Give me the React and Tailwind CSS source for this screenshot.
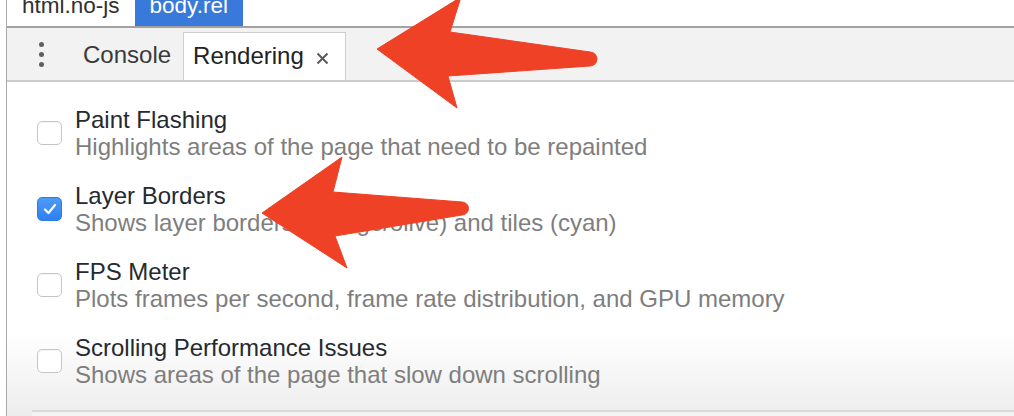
import { useState } from 'react';

const options = [
    {
        title: 'Paint Flashing',
        description: 'Highlights areas of the page that need to be repainted',
        checked: false
    },
    {
        title: 'Layer Borders',
        description: 'Shows layer borders (orange/olive) and tiles (cyan)',
        checked: true
    },
    {
        title: 'FPS Meter',
        description: 'Plots frames per second, frame rate distribution, and GPU memory',
        checked: false
    },
    {
        title: 'Scrolling Performance Issues',
        description: 'Shows areas of the page that slow down scrolling',
        checked: false
    }
];

function Checkbox({ checked, onChange }) {
    return (
        <button
            onClick={onChange}
            className={`shrink-0 w-[25px] h-[24px] rounded-[5px] border flex items-center justify-center ${
                checked
                    ? 'bg-linear-to-b from-[#4c9bf7] to-[#2f7ff0] border-[#2f7be6]'
                    : 'bg-white border-[#c6c6c6] shadow-[inset_0_1px_1px_rgba(0,0,0,0.04)]'
            }`}
        >
            {checked && (
                <svg width="14" height="12" viewBox="0 0 14 12" fill="none">
                    <path d="M2 6.5 L5.5 10 L12 2" stroke="white" strokeWidth="2.2" strokeLinecap="round" strokeLinejoin="round" />
                </svg>
            )}
        </button>
    );
}

export default function App() {
    const [state, setState] = useState(options.map((o) => o.checked));

    return (
        <div className="relative w-[1014px] h-[416px] overflow-hidden bg-white font-['Liberation_Sans',Arial,sans-serif] text-[24px]">
            <div className="ml-[6px] h-full border-l border-[#a9a9a9] flex flex-col">
                {/* breadcrumbs */}
                <div className="h-[26px] flex items-start text-[22.5px]">
                    <div className="h-[26px] px-[15px] text-[#303030]">
                        <span className="block leading-[22px] -mt-[5px]">html.no-js</span>
                    </div>
                    <div className="h-[26px] px-[15px] bg-[#3879d9] text-white">
                        <span className="block leading-[22px] -mt-[5px]">body.rel</span>
                    </div>
                </div>

                {/* drawer toolbar */}
                <div className="h-[56px] border-t-2 border-b-2 border-t-[#a2a2a2] border-b-[#cbcbcb] bg-[#f2f2f2] flex items-end">
                    <div className="w-[70px] h-full flex flex-col items-center justify-center gap-[5px] pl-[1px] -ml-[1px]">
                        <span className="w-[5px] h-[5px] rounded-full bg-[#5f5f5f]" />
                        <span className="w-[5px] h-[5px] rounded-full bg-[#5f5f5f]" />
                        <span className="w-[5px] h-[5px] rounded-full bg-[#5f5f5f]" />
                    </div>
                    <div className="h-full flex items-center pl-[7px] pr-[12px] pt-[1px] text-[#3a3a3a] leading-[27px]">Console</div>
                    <div className="h-[48px] bg-white border border-b-0 border-[#cdcdcd] flex items-center pl-[9px] pr-[16px] text-[#222] leading-[27px]">
                        <span className="pb-[2px]">Rendering</span>
                        <svg className="ml-[12px] mt-[4px]" width="13" height="13" viewBox="0 0 13 13">
                            <path d="M1.5 1.5 L11.5 11.5 M11.5 1.5 L1.5 11.5" stroke="#5a5a5a" strokeWidth="2" />
                        </svg>
                    </div>
                </div>

                {/* rendering options */}
                <div className="flex-1 flex flex-col bg-linear-to-b from-white from-[75%] to-[#ededed]">
                    <div className="flex-1 flex flex-col gap-[22px] pt-[24px] pl-[30px]">
                        {options.map((option, i) => (
                            <div key={option.title} className="flex items-center gap-[13px]">
                                <Checkbox
                                    checked={state[i]}
                                    onChange={() => setState((s) => s.map((v, j) => (j === i ? !v : v)))}
                                />
                                <div className="leading-[27px]">
                                    <div className="text-[#262a30]">{option.title}</div>
                                    <div className="text-[#7e7e7e]">{option.description}</div>
                                </div>
                            </div>
                        ))}
                    </div>
                    <div className="ml-[25px] h-[6px] border-t-2 border-[#dadada] bg-[#f3f3f3]" />
                </div>
            </div>

            {/* annotation arrows */}
            <svg className="absolute inset-0 pointer-events-none" width="1014" height="416" viewBox="0 0 1014 416">
                <path
                    d="M377 49 L461 -3 L450 32 L590 52 A7 7 0 0 1 590 66 L448 76 L457 108 Z"
                    fill="#ee4126"
                    stroke="#ee4126"
                    strokeLinejoin="round"
                />
                <path
                    d="M262 213 L342 157 L333 192 L462 202 A6.5 6.5 0 0 1 462 215 L335 236 L347 268 Z"
                    fill="#ee4126"
                    stroke="#ee4126"
                    strokeLinejoin="round"
                />
            </svg>
        </div>
    );
}
